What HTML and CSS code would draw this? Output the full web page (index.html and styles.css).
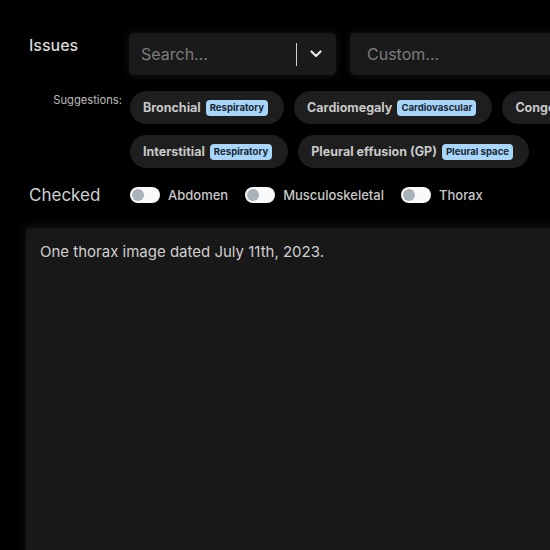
FILE: index.html
```html
<!DOCTYPE html>
<html>
<head>
<meta charset="utf-8">
<link rel="stylesheet" href="styles.css">
</head>
<body>
<div class="page">
  <div class="row issues-row">
    <div class="label issues-label">Issues</div>
    <div class="search box">
      <span class="placeholder">Search...</span>
      <span class="divider"></span>
      <svg class="chevron" width="12" height="8" viewBox="0 0 12 8"><path d="M1.5 1.5 L6 6 L10.5 1.5" fill="none" stroke="#e6e6e6" stroke-width="2.2" stroke-linecap="round" stroke-linejoin="round"/></svg>
    </div>
    <div class="custom box"><span class="placeholder">Custom...</span></div>
  </div>

  <div class="row sugg-row">
    <div class="label sugg-label">Suggestions:</div>
    <div class="chips">
      <div class="chip"><span class="chip-name">Bronchial</span><span class="badge">Respiratory</span></div>
      <div class="chip"><span class="chip-name">Cardiomegaly</span><span class="badge">Cardiovascular</span></div>
      <div class="chip"><span class="chip-name">Congestion</span><span class="badge">Cardiovascular</span></div>
      <div class="chip"><span class="chip-name">Interstitial</span><span class="badge">Respiratory</span></div>
      <div class="chip"><span class="chip-name">Pleural effusion (GP)</span><span class="badge">Pleural space</span></div>
    </div>
  </div>

  <div class="row checked-row">
    <div class="label checked-label">Checked</div>
    <div class="toggles">
      <div class="toggle-item"><span class="toggle"><span class="knob"></span></span><span class="toggle-text">Abdomen</span></div>
      <div class="toggle-item"><span class="toggle"><span class="knob"></span></span><span class="toggle-text">Musculoskeletal</span></div>
      <div class="toggle-item"><span class="toggle"><span class="knob"></span></span><span class="toggle-text">Thorax</span></div>
    </div>
  </div>

  <div class="notes">One thorax image dated July 11th, 2023.</div>
</div>
</body>
</html>
```

FILE: styles.css
```css
html, body {
  margin: 0;
  padding: 0;
  background: #000;
  overflow: hidden;
  width: 550px;
  height: 550px;
}
body {
  font-family: Inter, "Noto Sans", sans-serif;
  color: #d0d0d0;
}
.page {
  padding: 33px 0 0 29px;
  width: 720px;
}
.row {
  display: flex;
  align-items: flex-start;
}
.label {
  width: 100px;
  flex: none;
}
.issues-label {
  font-size: 16px;
  font-weight: 500;
  color: #d8d8d8;
  padding-top: 2px;
}
.box {
  background: #1a1a1a;
  border-radius: 5px;
  height: 42px;
  box-shadow: 0 0 6px 2px #0e0e0e;
  display: flex;
  align-items: center;
  box-sizing: border-box;
}
.search {
  width: 207px;
  padding-left: 12px;
}
.placeholder {
  font-size: 16px;
  color: #7c7c7c;
}
.search .placeholder {
  flex: 1;
}
.divider {
  width: 1.5px;
  height: 23px;
  background: #cfcfcf;
  margin-right: 13px;
}
.chevron {
  margin-right: 14px;
}
.custom {
  margin-left: 14px;
  width: 260px;
  padding-left: 17px;
}
.sugg-row {
  margin-top: 16px;
}
.sugg-label {
  width: 93px;
  margin-right: 8px;
  text-align: right;
  font-size: 11.2px;
  color: #bdbdbd;
  padding-top: 2px;
}
.chips {
  display: flex;
  flex-wrap: wrap;
  gap: 11px 10px;
  width: 580px;
}
.chip {
  height: 33px;
  border-radius: 17px;
  background: #1e1e1e;
  display: flex;
  align-items: center;
  padding: 0 16px 0 13px;
  box-sizing: border-box;
}
.chip-name {
  font-size: 12.5px;
  font-weight: 700;
  color: #c8c8c8;
  margin-right: 5px;
}
.badge {
  background: #a8d6fb;
  color: #1a2733;
  font-size: 9.6px;
  font-weight: 700;
  border-radius: 4px;
  padding: 2px 4px;
  line-height: 12px;
}
.checked-row {
  margin-top: 17px;
  align-items: center;
}
.checked-label {
  width: 101px;
  font-size: 17px;
  color: #cfcfcf;
}
.toggles {
  display: flex;
  align-items: center;
  gap: 17px;
}
.toggle-item {
  display: flex;
  align-items: center;
  gap: 8px;
}
.toggle {
  width: 30px;
  height: 16px;
  border-radius: 8px;
  background: #fafafa;
  display: flex;
  align-items: center;
  padding-left: 2px;
  box-sizing: border-box;
}
.knob {
  width: 12px;
  height: 12px;
  border-radius: 50%;
  background: #a9b1b9;
}
.toggle-text {
  font-size: 13px;
  font-weight: 500;
  color: #c8c8c8;
}
.notes {
  margin-top: 23px;
  margin-left: -3px;
  background: #181818;
  height: 400px;
  border-radius: 5px;
  box-shadow: 0 0 8px 3px #0e0e0e;
  padding: 14px 14px;
  font-size: 15px;
  color: #cfcfcf;
}
```
